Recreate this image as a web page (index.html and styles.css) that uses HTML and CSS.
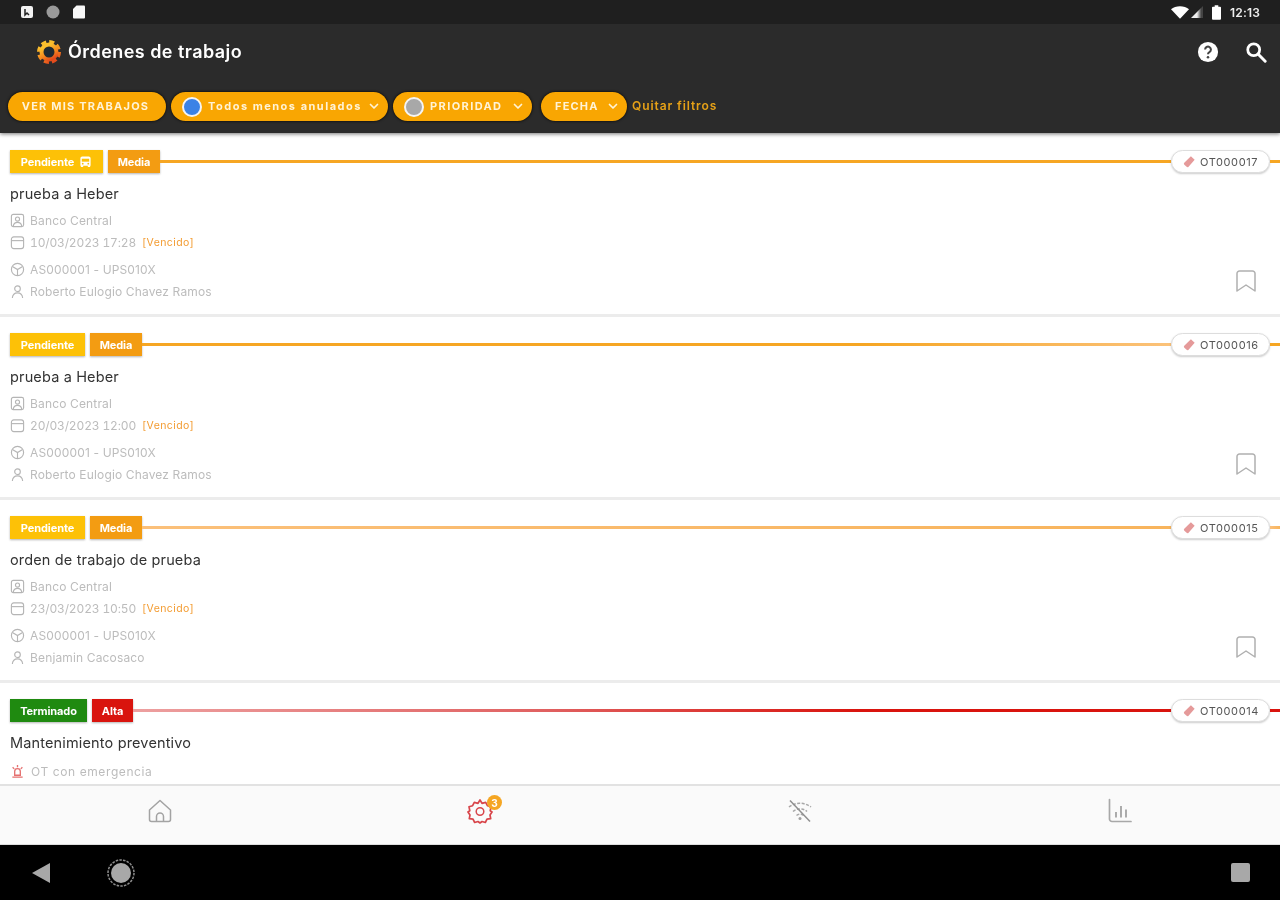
FILE: index.html
```html
<!DOCTYPE html>
<html lang="es">
<head>
<meta charset="utf-8">
<title>Órdenes de trabajo</title>
<link rel="stylesheet" href="styles.css">
</head>
<body>
<svg class="defs" width="0" height="0" aria-hidden="true">
  <symbol id="i-contact" viewBox="0 0 16 16"><rect x="1.5" y="1.5" width="13" height="13" rx="2" fill="none" stroke="currentColor" stroke-width="1.2"/><circle cx="8" cy="6.5" r="2.2" fill="none" stroke="currentColor" stroke-width="1.2"/><path d="M3.5 14c.5-3 2.3-4 4.5-4s4 1 4.500 4" fill="none" stroke="currentColor" stroke-width="1.2"/></symbol>
  <symbol id="i-cal" viewBox="0 0 16 16"><rect x="1.500" y="2" width="13" height="12.500" rx="2.500" fill="none" stroke="currentColor" stroke-width="1.2"/><path d="M1.500 6h13" stroke="currentColor" stroke-width="1.2"/></symbol>
  <symbol id="i-cube" viewBox="0 0 16 16"><circle cx="8" cy="8" r="6.500" fill="none" stroke="currentColor" stroke-width="1.2"/><path d="M3 5l5 3 5-3M8 8v6" fill="none" stroke="currentColor" stroke-width="1.2"/></symbol>
  <symbol id="i-user" viewBox="0 0 16 16"><circle cx="8" cy="5" r="3" fill="none" stroke="currentColor" stroke-width="1.2"/><path d="M2.500 15c.3-3.500 2.500-5.500 5.500-5.500s5.200 2 5.500 5.500" fill="none" stroke="currentColor" stroke-width="1.2"/></symbol>
  <symbol id="i-mark" viewBox="0 0 24 24"><path d="M3 4.500A2.500 2.500 0 0 1 5.500 2h13A2.500 2.500 0 0 1 21 4.500V22l-9-6-9 6z" fill="none" stroke="currentColor" stroke-width="1.500" stroke-linejoin="round"/></symbol>
  <symbol id="i-tag" viewBox="0 0 16 16"><path d="M9.500 2.500l4 3.500-6.500 7.500a1.500 1.500 0 0 1-2.100.1L2.500 11.500a1.500 1.500 0 0 1-.1-2.100z" fill="currentColor"/></symbol>
  <symbol id="i-chev" viewBox="0 0 12 12"><path d="M2.500 4.500L6 8l3.500-3.500" fill="none" stroke="currentColor" stroke-width="1.700" stroke-linecap="round" stroke-linejoin="round"/></symbol>
</svg>
<div class="app">
  <header class="top">
    <div class="status">
      <div class="status-left">
        <svg class="st-ico" viewBox="0 0 14 14"><rect x="1" y="1" width="12" height="12" rx="2" fill="#f2f2f2"/><path d="M5 4v6l2-2 2 2" fill="none" stroke="#222" stroke-width="1.500"/></svg>
        <svg class="st-ico" viewBox="0 0 14 14"><circle cx="7" cy="7" r="6.500" fill="#9a9a9a"/></svg>
        <svg class="st-ico" viewBox="0 0 14 14"><path d="M4.500 0.500H12a1 1 0 0 1 1 1V12.500a1 1 0 0 1-1 1H2a1 1 0 0 1-1-1V4z" fill="#f7f7f7"/></svg>
      </div>
      <div class="status-right">
        <svg class="st-wifi" viewBox="0 0 20 14"><path d="M0 3.500C5-1 15-1 20 3.500L10 14z" fill="#fff"/></svg>
        <svg class="st-sig" viewBox="0 0 14 14"><defs><linearGradient id="sg"><stop offset="0.500" stop-color="#eee"/><stop offset="0.850" stop-color="#444"/></linearGradient></defs><path d="M0 14L14 0v14z" fill="url(#sg)"/></svg>
        <svg class="st-bat" viewBox="0 0 10 16"><path d="M3 0h4v1.500h2a1 1 0 0 1 1 1V15a1 1 0 0 1-1 1H1a1 1 0 0 1-1-1V2.500a1 1 0 0 1 1-1h2z" fill="#fff"/></svg>
        <span class="clock">12:13</span>
      </div>
    </div>
    <div class="toolbar">
      <svg class="logo" viewBox="0 0 24 26">
        <defs><linearGradient id="lg" x1="0.200" y1="0" x2="0.700" y2="1"><stop offset="0.150" stop-color="#fbc02d"/><stop offset="0.600" stop-color="#f58a1f"/><stop offset="1" stop-color="#e2491c"/></linearGradient></defs>
        <circle cx="12" cy="13" r="10.200" fill="none" stroke="url(#lg)" stroke-width="3.600" stroke-dasharray="5 3"/>
        <circle cx="12" cy="13" r="7.500" fill="none" stroke="url(#lg)" stroke-width="4"/>
        <circle cx="12" cy="13" r="4.800" fill="#1e2a33"/>
      </svg>
      <h1 class="title">Órdenes de trabajo</h1>
      <div class="actions">
        <svg class="act" viewBox="0 0 24 24"><circle cx="12" cy="12" r="11" fill="#fff"/><path d="M8.800 9.300a3.200 3.200 0 1 1 4.800 2.800c-1 .6-1.600 1.100-1.600 2.400" fill="none" stroke="#444" stroke-width="2.200"/><circle cx="12" cy="17.700" r="1.400" fill="#444"/></svg>
        <svg class="act" viewBox="0 0 24 24"><circle cx="9.500" cy="9.500" r="6.500" fill="none" stroke="#fff" stroke-width="3"/><path d="M14.500 14.500L22 22" stroke="#fff" stroke-width="3.200" stroke-linecap="round"/></svg>
      </div>
    </div>
    <div class="filters">
      <div class="chip chip-plain">VER MIS TRABAJOS</div>
      <div class="chip chip-lower"><span class="dot dot-blue"></span>Todos menos anulados<svg class="chev"><use href="#i-chev"/></svg></div>
      <div class="chip chip-prio"><span class="dot dot-grey"></span>PRIORIDAD<svg class="chev"><use href="#i-chev"/></svg></div>
      <div class="chip chip-date">FECHA<svg class="chev"><use href="#i-chev"/></svg></div>
      <span class="clear">Quitar filtros</span>
    </div>
  </header>

  <main class="list">
    <article class="card">
      <div class="tags">
        <span class="tag tag-pend tag-wide">Pendiente<svg class="bus" viewBox="0 0 14 14"><path d="M3.500 1.500h7a2 2 0 0 1 2 2v8h-11v-8a2 2 0 0 1 2-2z" fill="#fff"/><path d="M3 4h8v3.200H3z" fill="#fdc107"/><path d="M2 11h2.500v2H2zM9.500 11H12v2H9.500z" fill="#fff"/><circle cx="4" cy="9.300" r="1" fill="#fdc107"/><circle cx="10" cy="9.300" r="1" fill="#fdc107"/></svg></span>
        <span class="tag tag-med">Media</span>
        <span class="rule rule-o1"></span>
        <span class="pill"><svg class="pill-ico"><use href="#i-tag"/></svg>OT000017</span>
        <span class="rule-end rule-o1"></span>
      </div>
      <h2 class="name">prueba a Heber</h2>
      <div class="body">
        <div class="info">
          <div class="row"><svg class="ico"><use href="#i-contact"/></svg>Banco Central</div>
          <div class="row row-gap"><svg class="ico"><use href="#i-cal"/></svg>10/03/2023 17:28<span class="late">[Vencido]</span></div>
          <div class="row"><svg class="ico"><use href="#i-cube"/></svg>AS000001 - UPS010X</div>
          <div class="row"><svg class="ico"><use href="#i-user"/></svg>Roberto Eulogio Chavez Ramos</div>
        </div>
        <svg class="mark"><use href="#i-mark"/></svg>
      </div>
    </article>
    <article class="card">
      <div class="tags">
        <span class="tag tag-pend">Pendiente</span>
        <span class="tag tag-med">Media</span>
        <span class="rule rule-o2"></span>
        <span class="pill"><svg class="pill-ico"><use href="#i-tag"/></svg>OT000016</span>
        <span class="rule-end rule-o1"></span>
      </div>
      <h2 class="name">prueba a Heber</h2>
      <div class="body">
        <div class="info">
          <div class="row"><svg class="ico"><use href="#i-contact"/></svg>Banco Central</div>
          <div class="row row-gap"><svg class="ico"><use href="#i-cal"/></svg>20/03/2023 12:00<span class="late">[Vencido]</span></div>
          <div class="row"><svg class="ico"><use href="#i-cube"/></svg>AS000001 - UPS010X</div>
          <div class="row"><svg class="ico"><use href="#i-user"/></svg>Roberto Eulogio Chavez Ramos</div>
        </div>
        <svg class="mark"><use href="#i-mark"/></svg>
      </div>
    </article>
    <article class="card">
      <div class="tags">
        <span class="tag tag-pend">Pendiente</span>
        <span class="tag tag-med">Media</span>
        <span class="rule rule-o3"></span>
        <span class="pill"><svg class="pill-ico"><use href="#i-tag"/></svg>OT000015</span>
        <span class="rule-end rule-o3"></span>
      </div>
      <h2 class="name">orden de trabajo de prueba</h2>
      <div class="body">
        <div class="info">
          <div class="row"><svg class="ico"><use href="#i-contact"/></svg>Banco Central</div>
          <div class="row row-gap"><svg class="ico"><use href="#i-cal"/></svg>23/03/2023 10:50<span class="late">[Vencido]</span></div>
          <div class="row"><svg class="ico"><use href="#i-cube"/></svg>AS000001 - UPS010X</div>
          <div class="row"><svg class="ico"><use href="#i-user"/></svg>Benjamin Cacosaco</div>
        </div>
        <svg class="mark"><use href="#i-mark"/></svg>
      </div>
    </article>
    <article class="card">
      <div class="tags">
        <span class="tag tag-done">Terminado</span>
        <span class="tag tag-high">Alta</span>
        <span class="rule rule-r"></span>
        <span class="pill"><svg class="pill-ico"><use href="#i-tag"/></svg>OT000014</span>
        <span class="rule-end rule-r-end"></span>
      </div>
      <h2 class="name">Mantenimiento preventivo</h2>
      <div class="row row-alert"><svg class="ico ico-alert" viewBox="0 0 16 16"><path d="M5 8a3 3 0 0 1 6 0v4H5z" fill="none" stroke="currentColor" stroke-width="1.400"/><path d="M2.500 14h11M8 1v2.500M2.800 3.500l1.700 1.700M13.200 3.500l-1.700 1.700" stroke="currentColor" stroke-width="1.400"/></svg>OT con emergencia</div>
    </article>
  </main>

  <nav class="tabs">
    <div class="tab"><svg class="tab-ico" viewBox="0 0 26 26"><path d="M2.500 12L13 2.500 23.500 12v9.500a2 2 0 0 1-2 2h-17a2 2 0 0 1-2-2z" fill="none" stroke="#a3a3a3" stroke-width="1.500" stroke-linejoin="round"/><path d="M9.500 23.500v-5a3.500 3.500 0 0 1 7 0v5" fill="none" stroke="#a3a3a3" stroke-width="1.500"/></svg></div>
    <div class="tab"><span class="tab-wrap"><svg class="tab-ico" viewBox="0 0 26 26"><path d="M13 2l2 3.300 3.700-.9 1.700 3.300 3.600 1.100-.8 3.900L25 14l-2 3 .7 3.600-3.700.6-1.700 3.300-3.300-1L13 25l-2-1.500-3.300 1L6 21.200l-3.700-.6L3 17l-2-3 1.800-1.300L2 8.800l3.600-1.100 1.700-3.300 3.700.9z" fill="none" stroke="#d8454a" stroke-width="1.700" stroke-linejoin="round"/><circle cx="13" cy="13.500" r="3.800" fill="none" stroke="#d8454a" stroke-width="1.500"/></svg><span class="badge">3</span></span></div>
    <div class="tab"><svg class="tab-ico" viewBox="0 0 26 26"><path d="M2 9c6-5 15-5 22 0M6 13.500c4-3.500 10-3.500 14 0M9.500 17.500c2-1.700 5-1.700 7 0" fill="none" stroke="#a8a8a8" stroke-width="1.500" stroke-dasharray="3 1.500"/><circle cx="13" cy="20.500" r="1.500" fill="#a0a0a0"/><path d="M3 2.500l20 21" stroke="#8f8f8f" stroke-width="1.500"/></svg></div>
    <div class="tab"><svg class="tab-ico" viewBox="0 0 26 26"><path d="M2.500 1.500V21a2.500 2.500 0 0 0 2.500 2.500h19" fill="none" stroke="#a8a8a8" stroke-width="1.700" stroke-linecap="round"/><path d="M9 14v5.500M14 8v11.500M19 11.500v8" stroke="#a8a8a8" stroke-width="1.900"/></svg></div>
  </nav>

  <footer class="sysnav">
    <svg class="sys-back" viewBox="0 0 18 20"><path d="M18 0v20L0 10z" fill="#a8a8a8"/></svg>
    <svg class="sys-home" viewBox="0 0 28 28"><circle cx="14" cy="14" r="13" fill="none" stroke="#8d8d8d" stroke-width="1.500" stroke-dasharray="2.500 1.200"/><circle cx="14" cy="14" r="10" fill="#a8a8a8"/></svg>
    <span class="sys-square"></span>
  </footer>
</div>
</body>
</html>
```
FILE: styles.css
```css
* { box-sizing: border-box; }
html, body { margin: 0; height: 100%; }
body { font-family: "Inter", "Noto Sans", sans-serif; background: #fff; overflow: hidden; }
.defs { position: absolute; }
.app { height: 900px; display: flex; flex-direction: column; filter: blur(0.45px); }

.top { flex: none; background: #2b2b2b; height: 133px; box-shadow: 0 1px 4px rgba(0,0,0,.55); position: relative; z-index: 2; }
.status { height: 24px; background: #1f1f1f; display: flex; align-items: center; justify-content: space-between; padding: 0 14px 0 20px; }
.status-left { display: flex; gap: 12px; }
.st-ico { width: 14px; height: 14px; }
.status-right { display: flex; align-items: center; }
.st-wifi { width: 18px; height: 13px; }
.st-sig { width: 12px; height: 12px; margin-left: 2px; }
.st-bat { width: 9px; height: 15px; margin-left: 9px; }
.clock { font-size: 12px; font-weight: 600; color: #eee; margin-left: 9px; width: 36px; letter-spacing: .2px; }

.toolbar { height: 56px; display: flex; align-items: center; padding: 0 13px 0 37px; }
.logo { width: 24px; height: 26px; flex: none; }
.title { margin: 0 0 2px 7px; font-size: 18px; font-weight: 600; color: #fff; letter-spacing: .45px; }
.actions { margin-left: auto; display: flex; gap: 26px; align-items: center; }
.act { width: 22px; height: 22px; display: block; }

.filters { margin-top: 12px; height: 29px; padding-left: 8px; display: flex; align-items: center; gap: 5px; }
.chip { height: 29px; border-radius: 15px; background: #f9a602; color: #fff3d6; font-size: 11px; font-weight: 700; letter-spacing: 1.2px; display: flex; align-items: center; box-shadow: 0 0 3px #000; white-space: nowrap; padding-bottom: 2px; }
.chip-plain { width: 158px; justify-content: center; padding-right: 3px; }
.chip-lower { width: 217px; padding-left: 11px; letter-spacing: 1.5px; }
.chip-prio { width: 139px; padding-left: 11px; letter-spacing: 1.4px; }
.chip-date { width: 86px; padding-left: 14px; margin-left: 4px; }
.dot { width: 20px; height: 20px; border-radius: 50%; border: 2px solid #f4f4f4; margin: 2px 6px 0 0; flex: none; }
.dot-blue { background: #3b82e6; }
.dot-grey { background: #a8a8a8; }
.chev { width: 12px; height: 12px; color: #fff3d6; margin-left: auto; margin-right: 8px; flex: none; }
.clear { font-size: 12px; font-weight: 600; color: #e6a117; letter-spacing: .9px; padding-bottom: 2px; }

.list { flex: 1; min-height: 0; overflow: hidden; padding-top: 1px; }
.card { height: 183px; padding-top: 16px; border-bottom: 3px solid #ececec; }
.tags { height: 23px; display: flex; align-items: center; padding-left: 10px; }
.tag { height: 23px; display: flex; align-items: center; padding: 0 10px; font-size: 11px; font-weight: 700; color: #fff; margin-right: 5px; box-shadow: 0 1px 2px rgba(0,0,0,.3); white-space: nowrap; letter-spacing: -.1px; }
.tag + .tag { margin-right: 0; }
.tag-pend { background: #fdc107; width: 75px; justify-content: center; padding: 0; }
.tag-wide { width: 93px; gap: 5px; }
.bus { width: 13px; height: 13px; }
.tag-med { background: #f39c12; width: 52px; justify-content: center; padding: 0; }
.tag-done { background: #1f8a10; width: 77px; justify-content: center; padding: 0; }
.tag-high { background: #d9140e; width: 41px; justify-content: center; padding: 0; }
.rule { flex: 1; height: 3px; }
.rule-end { width: 10px; height: 3px; flex: none; }
.rule-o1 { background: #f6a623; }
.rule-o2 { background: linear-gradient(90deg, #f6a623, #f6a623 70%, #fbc27a); }
.rule-o3 { background: linear-gradient(90deg, #fbc07a, #f8b45c); }
.rule-r { background: linear-gradient(90deg, #eda0a0, #e06060 40%, #d9140e 70%); }
.rule-r-end { background: #d9140e; }
.pill { width: 99px; height: 23px; flex: none; border-radius: 12px; background: #fff; border: 1px solid #ddd; box-shadow: 0 1px 2px rgba(0,0,0,.2); display: flex; align-items: center; padding-left: 10px; font-size: 11px; color: #555; letter-spacing: .6px; }
.pill-ico { width: 15px; height: 15px; color: #e59a9a; margin-right: 3px; flex: none; }

.name { margin: 11px 0 0 10px; font-size: 14.5px; line-height: 20px; font-weight: 400; color: #333; letter-spacing: .15px; }
.body { display: flex; align-items: flex-end; justify-content: space-between; padding: 5px 22px 0 10px; }
.row { height: 22px; display: flex; align-items: center; font-size: 12px; color: #bcbcbc; white-space: nowrap; letter-spacing: .15px; }
.row-gap { margin-bottom: 5px; letter-spacing: -.15px; font-variant-numeric: tabular-nums; }
.ico { width: 15px; height: 15px; color: #b5b5b5; margin-right: 5px; flex: none; }
.late { font-size: 10.5px; color: #f39c32; margin-left: 6px; letter-spacing: .4px; }
.mark { width: 24px; height: 24px; color: #b0b0b0; flex: none; margin-bottom: 9px; }
.row-alert { margin: 7px 0 0 10px; letter-spacing: .6px; }
.ico-alert { color: #e5706f; margin-right: 6px; }

.tabs { flex: none; height: 61px; background: #fafafa; border-top: 2px solid #e2e2e2; border-bottom: 1px solid #ddd; display: grid; grid-template-columns: repeat(4, 1fr); position: relative; z-index: 1; padding-bottom: 8px; }
.tab { display: flex; align-items: center; justify-content: center; }
.tab-wrap { position: relative; display: flex; }
.tab-ico { width: 26px; height: 26px; display: block; }
.badge { position: absolute; left: 20px; top: -3px; width: 15px; height: 15px; border-radius: 50%; background: #f5a623; color: #fff; font-size: 10px; font-weight: 700; display: flex; align-items: center; justify-content: center; }

.sysnav { flex: none; height: 55px; background: #000; display: flex; align-items: center; padding: 0 30px 0 32px; }
.sys-back { width: 18px; height: 20px; }
.sys-home { width: 28px; height: 28px; margin-left: 57px; }
.sys-square { width: 19px; height: 19px; border-radius: 2px; background: #a8a8a8; margin-left: auto; }
```
